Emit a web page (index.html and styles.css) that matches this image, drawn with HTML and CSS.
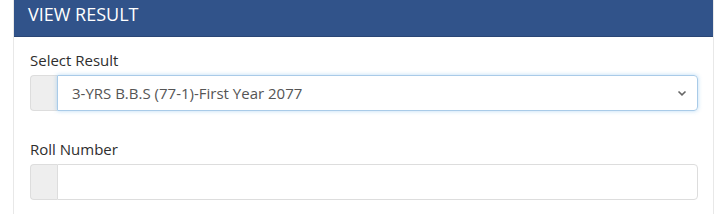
FILE: index.html
```html
<!DOCTYPE html>
<html lang="en">
<head>
	<meta charset="UTF-8">
	<title>View Result</title>
	<link rel="stylesheet" href="styles.css">
</head>
<body>
	<div class="panel">
		<div class="panel-heading">VIEW RESULT</div>
		<div class="panel-body">
			<div class="form-group">
				<label>Select Result</label>
				<div class="input-group">
					<span class="addon"></span>
					<div class="select focus">
						<span>3-YRS B.B.S (77-1)-First Year 2077</span>
						<svg width="10" height="8" viewBox="0 0 10 8"><path d="M1.5 2.5 L5 5.8 L8.5 2.5" fill="none" stroke="#666" stroke-width="1.6"/></svg>
					</div>
				</div>
			</div>
			<div class="form-group">
				<label>Roll Number</label>
				<div class="input-group">
					<span class="addon"></span>
					<div class="select"></div>
				</div>
			</div>
		</div>
	</div>
</body>
</html>
```

FILE: styles.css
```css
body {
	margin: 0;
	font-family: "Open Sans", sans-serif;
	background-color: #fff;
}

.panel {
	margin: 0 6px 0 13px;
	border-left: 1px solid #e8e8e8;
	border-right: 1px solid #e8e8e8;
	height: 214px;
}

.panel-heading {
	background-color: #31538a;
	color: #fff;
	font-size: 18px;
	height: 37px;
	line-height: 29px;
	padding-left: 14px;
	border-bottom: 1px solid #2a4675;
	box-sizing: border-box;
}

.panel-body {
	padding: 13px 15px 0 16px;
}

.form-group {
	margin-bottom: 28px;
}

.form-group label {
	display: block;
	font-size: 15px;
	color: #2e2e2e;
	margin-bottom: 5px;
	line-height: 20px;
}

.input-group {
	display: flex;
	height: 36px;
}

.addon {
	width: 26px;
	background-color: #eee;
	border: 1px solid #ddd;
	border-right: none;
	border-radius: 4px 0 0 4px;
}

.select {
	flex: 1;
	display: flex;
	align-items: center;
	justify-content: space-between;
	padding: 0 10px 0 14px;
	border: 1px solid #ddd;
	border-radius: 0 4px 4px 0;
	font-size: 15px;
	color: #555;
}

.select.focus {
	border-color: #a9cbe8;
	box-shadow: 0 0 4px rgba(102, 175, 233, 0.45);
}
```
